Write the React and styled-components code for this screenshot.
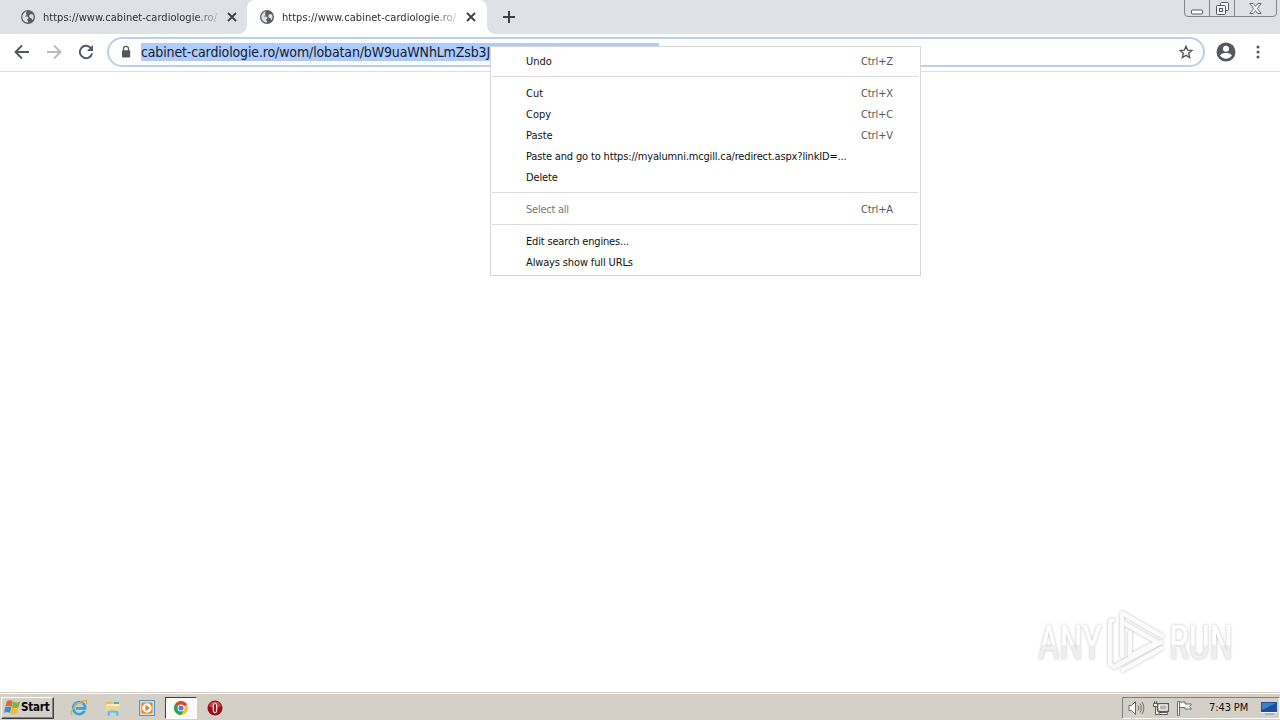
import React from "react";
import styled, { createGlobalStyle, css } from "styled-components";

const GlobalStyle = createGlobalStyle`
  * {
    box-sizing: border-box;
  }
  body {
    margin: 0;
    overflow: hidden;
    background: #fff;
    font-family: "DejaVu Sans Condensed", "DejaVu Sans", Tahoma, sans-serif;
    font-stretch: condensed;
    font-size: 11px;
  }
  svg {
    display: block;
    flex: none;
  }
`;

const Screen = styled.div`
  width: 1280px;
  height: 720px;
  display: flex;
  flex-direction: column;
`;

// ---- tab strip ----
const TabStrip = styled.div`
  height: 34px;
  flex: none;
  display: flex;
  background: #dee1e6;
`;

const Tab = styled.div`
  position: relative;
  width: 240px;
  height: 34px;
  display: flex;
  align-items: center;
  padding: 0 9px 0 12px;
  margin-left: ${(p) => (p.$active ? "-1px" : "8px")};
  border-radius: 8px 8px 0 0;
  background: ${(p) => (p.$active ? "#fff" : "transparent")};

  ${(p) =>
    p.$active &&
    css`
      &::before,
      &::after {
        content: "";
        position: absolute;
        bottom: 0;
        width: 8px;
        height: 8px;
      }
      &::before {
        left: -8px;
        background: radial-gradient(circle at 0 0, transparent 7.5px, #fff 8px);
      }
      &::after {
        right: -8px;
        background: radial-gradient(circle at 100% 0, transparent 7.5px, #fff 8px);
      }
    `}
`;

const TabTitle = styled.div`
  width: 177px;
  margin: 0 7px 0 7px;
  padding-top: 1px;
  white-space: nowrap;
  line-height: 16px;
  letter-spacing: 0.03px;
  color: #2c2f33;
  mask-image: linear-gradient(to right, #000 152px, transparent 180px);
`;

const NewTab = styled.div`
  width: 28px;
  margin-left: 8px;
  display: flex;
  align-items: center;
  justify-content: center;
`;

const WindowButtons = styled.div`
  margin: -1px 3px 0 auto;
  height: 18px;
  display: flex;
  border: 1px solid #83868c;
  border-radius: 0 0 4px 4px;
`;

const WindowButton = styled.div`
  width: ${(p) => p.$width}px;
  display: flex;
  align-items: center;
  justify-content: center;
  & + & {
    border-left: 1px solid #83868c;
  }
`;

// ---- toolbar ----
const Toolbar = styled.div`
  height: 38px;
  flex: none;
  display: flex;
  align-items: center;
  padding: 0 14px 1px;
  border-bottom: 1px solid #dcdee1;
  background: #fff;
`;

const NavButtons = styled.div`
  display: flex;
  gap: 16px;
`;

const Omnibox = styled.div`
  width: 1098px;
  height: 30px;
  margin: 0 11px 0 13px;
  display: flex;
  align-items: center;
  padding: 0 9px;
  border: 2px solid #bdd0ea;
  border-radius: 15px;
`;

const Selection = styled.div`
  width: 518px;
  height: 18px;
  margin: 0 auto 0 7px;
  overflow: hidden;
  white-space: nowrap;
  line-height: 18px;
  font-size: 14px;
  letter-spacing: -0.14px;
  color: #101c33;
  background: #aecbfa;
`;

const Profile = styled.div`
  margin-right: 14px;
`;

// ---- context menu ----
const Menu = styled.div`
  position: absolute;
  left: 490px;
  top: 46px;
  width: 431px;
  height: 230px;
  padding: 4px 1px;
  border: 1px solid #d5d7da;
  background: #fff;
`;

const MenuItem = styled.div`
  height: 21px;
  display: flex;
  align-items: center;
  justify-content: space-between;
  padding: 0 26px 0 34px;
  white-space: nowrap;
  letter-spacing: ${(p) => p.$spacing || "-0.02px"};
  color: ${(p) => (p.$disabled ? "#77797c" : "#111")};
`;

const Shortcut = styled.span`
  letter-spacing: -0.12px;
  color: #55585c;
`;

const Divider = styled.div`
  height: 1px;
  margin: 4px 1px 6px 0;
  background: #dadce0;
`;

const Page = styled.main`
  flex: 1;
  display: flex;
  align-items: flex-end;
  justify-content: flex-end;
  padding: 0 40px 14px 0;
`;

// ---- taskbar ----
const Taskbar = styled.div`
  height: 28px;
  flex: none;
  display: flex;
  align-items: center;
  padding: 2px 0 0 1px;
  border-top: 1px solid #d4d0c8;
  box-shadow: inset 0 1px #fff;
  background: #d4d0c8;
`;

const StartButton = styled.div`
  width: 53px;
  height: 22px;
  display: flex;
  align-items: center;
  padding: 0 0 1px 2px;
  border: 1px solid;
  border-color: #fff #404040 #404040 #fff;
  box-shadow: inset -1px -1px #808080;
  font-size: 11.5px;
  font-weight: bold;
  letter-spacing: -0.2px;
  color: #000;
`;

const QuickLaunch = styled.div`
  display: flex;
  align-items: center;
  margin-left: 8px;
`;

const LaunchItem = styled.div`
  width: ${(p) => (p.$pressed ? 32 : 34)}px;
  height: 22px;
  margin-right: ${(p) => (p.$pressed ? 1 : 0)}px;
  margin-left: ${(p) => (p.$pressed ? 1 : 0)}px;
  display: flex;
  align-items: center;
  justify-content: center;
  ${(p) =>
    p.$pressed &&
    css`
      border: 1px solid;
      border-color: #404040 #fff #fff #404040;
      background: #fcfbfa;
    `}
`;

const Tray = styled.div`
  width: 158px;
  height: 22px;
  margin-left: auto;
  display: flex;
  align-items: center;
  padding-left: 5px;
  border: 1px solid;
  border-color: #808080 #fff #fff #808080;
`;

const TrayIcons = styled.div`
  display: flex;
  gap: 8px;
`;

const Clock = styled.div`
  width: 40px;
  margin: 0 12px 0 15px;
  padding-bottom: 1px;
  white-space: nowrap;
  letter-spacing: -0.1px;
  color: #111;
`;

function Globe() {
  return (
    <svg width="16" height="16" viewBox="0 0 16 16">
      <circle cx="8" cy="8" r="7" fill="#5a5e63" />
      <path
        d="M8.400 2.300c-.3 1-1.500.8-1.600 1.700-.1.800.6 1.200 0 1.900-.5.600-1.400.2-1.700 1 1.300.3 2.700.1 3.200 1.300.4 1-.5 1.300-1.300 1.600-.6.300-.3 1.400.3 2.300l-.5 1.200A5.700 5.700 0 0 1 2.300 7.800 5.700 5.700 0 0 1 8.400 2.300z"
        fill="#dee1e6"
        transform="rotate(-12 8 8)"
      />
      <path d="M9.500 6.200c.3-1.200 1.500-1.100 3.400-.7.900 1.500.9 3.800-.2 5.400-.9.100-.7-1.600-1.700-1.900-1.400-.4-2-1.500-1.500-2.800z" fill="#dee1e6" />
    </svg>
  );
}

function Close() {
  return (
    <svg width="10" height="10" viewBox="0 0 10 10" stroke="#3c4043" strokeWidth="1.800">
      <path d="M1 1l8 8M9 1l-8 8" />
    </svg>
  );
}

function Arrow({ flip, color }) {
  return (
    <svg width="16" height="16" viewBox="0 0 16 16" fill="none" stroke={color} strokeWidth="1.900">
      <path d={flip ? "M1 8h13M8 1.500l6.500 6.500L8 14.500" : "M15 8H2M8 1.500L1.500 8 8 14.500"} />
    </svg>
  );
}

function Reload() {
  return (
    <svg width="16" height="16" viewBox="0 0 16 16">
      <path d="M13.200 4.500A6.200 6.200 0 1 0 14.100 9.400" fill="none" stroke="#54585d" strokeWidth="2" />
      <path d="M15 1v6H9z" fill="#54585d" />
    </svg>
  );
}

function Lock() {
  return (
    <svg width="16" height="16" viewBox="0 0 16 16">
      <path d="M5.500 7V4.800a2.500 2.500 0 0 1 5 0V7" fill="none" stroke="#54585d" strokeWidth="1.300" />
      <rect x="4" y="6.200" width="8.200" height="7.300" rx="1" fill="#54585d" />
    </svg>
  );
}

function Star() {
  return (
    <svg width="16" height="16" viewBox="0 0 16 16" fill="none" stroke="#54585d" strokeWidth="1.400">
      <path d="M8 2.200l1.650 3.900 4.250.4-3.200 2.800.95 4.200L8 11.300l-3.650 2.200.95-4.200-3.200-2.800 4.250-.4z" />
    </svg>
  );
}

function Avatar() {
  return (
    <svg width="20" height="20" viewBox="0 0 20 20">
      <circle cx="10" cy="10" r="9.500" fill="#54585d" />
      <circle cx="10" cy="6.800" r="3" fill="#fff" />
      <path d="M4 13.500c1-2 4-2.500 6-2.500s5 .5 6 2.500c-1.300 2-3.500 3.200-6 3.200s-4.700-1.200-6-3.200z" fill="#fff" />
    </svg>
  );
}

function WindowsFlag() {
  return (
    <svg width="17" height="17" viewBox="0 0 17 16">
      <path d="M2.800 1.800c2-1.500 4.300-1.500 6-.1L7.500 7.400C5.700 6 3.700 6 1.400 7.200z" fill="#e5652c" />
      <path d="M9.300 2c2 1.400 4.300 1.300 6.900-.2l-1.500 5.800c-2.300 1.300-4.700 1.300-6.700.1z" fill="#79b43c" />
      <path d="M1.200 7.800C3.300 6.500 5.500 6.600 7.300 8l-1.400 5.500C4.200 12.200 2.200 12.200 0 13.400z" fill="#3a8fd0" />
      <path d="M7.800 8.300c2 1.100 4.400 1.100 6.700-.1L13 13.800c-2.200 1.300-4.500 1.300-6.600.1z" fill="#f2b92e" />
    </svg>
  );
}

function InternetExplorer() {
  return (
    <svg width="18" height="18" viewBox="0 0 18 18" fill="none">
      <path d="M14.600 11.800A6 6 0 1 1 15.200 9.400H6" stroke="#35a3dc" strokeWidth="2.600" />
      <path d="M4.400 6.800c1.200-3 5.700-4.100 8.700-1.300" stroke="#8fd4f3" />
      <path d="M2.400 16C-.8 15 2.500 9.200 7 5.600 11.300 2.200 16 .4 16.700 2.200c.3.800 0 1.800-.6 3" stroke="#dcae3c" strokeWidth="1.300" />
    </svg>
  );
}

function Folder() {
  return (
    <svg width="18" height="18" viewBox="0 0 18 18">
      <path d="M2 3l5-1 1 1.500h7V12H2z" fill="#e3c35f" />
      <path d="M10 3h5v3h-5z" fill="#58ad9c" />
      <path d="M2.500 5h13v8h-13z" fill="#faf0b8" />
      <path d="M1.500 7h14.500v6H1.500z" fill="#efd985" />
      <path d="M3.500 16.500V13c0-3.200 11-3.200 11 0v3.500H12v-3H6v3z" fill="#6dbbe2" />
      <path d="M4.500 12c1.500-1.500 7.500-1.500 9 0" fill="none" stroke="#c1e6f6" />
    </svg>
  );
}

function MediaPlayer() {
  return (
    <svg width="18" height="18" viewBox="0 0 18 18">
      <rect x="1.500" y="1.500" width="15" height="15" fill="#c5def0" stroke="#5596c9" />
      <rect x="3.500" y="3.500" width="11" height="11" rx="1" fill="#f18518" />
      <circle cx="9" cy="9" r="4.700" fill="#fff" />
      <path d="M7.500 5.800v6.400L12 9z" fill="#ef7d12" />
    </svg>
  );
}

function Chrome() {
  return (
    <svg width="16" height="16" viewBox="0 0 16 16">
      <circle cx="8" cy="8" r="7" fill="#efc329" />
      <path d="M8 8L1.940 4.500A7 7 0 0 1 14.060 4.500z" fill="#dc4335" />
      <path d="M1.940 4.500A7 7 0 0 0 8 15l3-5-3-2z" fill="#26a35a" />
      <circle cx="8" cy="8" r="3.500" fill="#fff" />
      <circle cx="8" cy="8" r="2.600" fill="#4285e4" />
    </svg>
  );
}

function Opera() {
  return (
    <svg width="16" height="16" viewBox="0 0 16 16">
      <circle cx="8" cy="8" r="7.500" fill="#9c0d15" />
      <path d="M2 6a6.300 6.300 0 0 1 12 0c-2 2-10 2-12 0z" fill="#cf4146" />
      <ellipse cx="8" cy="8" rx="2.400" ry="5.300" fill="#fff" />
      <ellipse cx="8" cy="8" rx="1.200" ry="4.500" fill="#a3121a" />
    </svg>
  );
}

function Speaker() {
  return (
    <svg width="17" height="16" viewBox="0 0 17 16" fill="none" stroke="#6b6b69">
      <path d="M1 5.500h2.500L7.500 1.500v13l-4-4H1z" fill="#fff" />
      <path d="M10 5.500c1 1.500 1 3.500 0 5M12 3.500c1.700 2.500 1.700 6.500 0 9M14 2c2.400 3.500 2.400 8.500 0 12" />
    </svg>
  );
}

function Network() {
  return (
    <svg width="16" height="16" viewBox="0 0 16 16" fill="none" stroke="#5a5a58">
      <rect x="4.500" y="3.500" width="11" height="8" fill="#b5b3af" />
      <path d="M6.500 5h7.500v5H6.500z" stroke="#fff" />
      <path d="M.5 3.500h4v3h-4zM1.500 1v2M3.500 1v2M2.500 7v7.500h3" fill="#fff" />
      <path d="M6 14.500h8.500v-2H6z" fill="#fff" />
    </svg>
  );
}

function Flag() {
  return (
    <svg width="17" height="16" viewBox="0 0 17 16" stroke="#6b6b69">
      <path d="M.5 1.500h2v14h-2z" fill="#fff" />
      <path d="M2.500 2h5.500v2h6.500l-2 2.500 2 2.500H8V7.500H2.500z" fill="#fff" />
    </svg>
  );
}

function Desktop() {
  return (
    <svg width="16" height="16" viewBox="0 0 16 16">
      <path d="M0 2h16v10H0z" fill="#1d4f9e" />
      <path d="M1 3h14L1 10z" fill="#3f80cc" />
      <path d="M0 12h16v1H0z" fill="#eef4fa" />
      <path d="M4 14h9" stroke="#7f96ad" />
    </svg>
  );
}

// Faint white lettering with a soft grey edge
function Watermark() {
  return (
    <svg width="210" height="70" viewBox="0 0 210 70">
      <defs>
        <filter id="edge" x="-10%" y="-20%" width="120%" height="140%">
          <feDropShadow dx="0" dy="0" stdDeviation="1.500" floodColor="#777" floodOpacity="0.500" />
        </filter>
        <linearGradient id="fade" x1="0" y1="0" x2="0" y2="1">
          <stop offset="55%" stopColor="#fff" />
          <stop offset="55%" stopColor="#efefef" />
        </linearGradient>
      </defs>
      <g filter="url(#edge)" fill="url(#fade)" fontFamily="Roboto, sans-serif" fontSize="48">
        <text x="8" y="51" textLength="64" lengthAdjust="spacingAndGlyphs">ANY</text>
        <text x="139" y="51" textLength="64" lengthAdjust="spacingAndGlyphs">RUN</text>
      </g>
      <g filter="url(#edge)" fill="none" stroke="#fbfbfb" strokeWidth="4" strokeLinejoin="round" strokeLinecap="round">
        <path d="M92 48V5l40 23M100 24v24l27-14L92 14M83 12c-2 0-3 1-3 3v41l4 3 47-25M93 62l39-22" />
      </g>
    </svg>
  );
}

const tabs = [
  { title: "https://www.cabinet-cardiologie.ro/" },
  { title: "https://www.cabinet-cardiologie.ro/", active: true },
];

// null draws a divider
const menuItems = [
  { label: "Undo", keys: "Ctrl+Z" },
  null,
  { label: "Cut", keys: "Ctrl+X" },
  { label: "Copy", keys: "Ctrl+C" },
  { label: "Paste", keys: "Ctrl+V" },
  { label: "Paste and go to https://myalumni.mcgill.ca/redirect.aspx?linkID=...", spacing: "-0.16px" },
  { label: "Delete", spacing: "-0.16px" },
  null,
  { label: "Select all", keys: "Ctrl+A", disabled: true, spacing: "-0.25px" },
  null,
  { label: "Edit search engines...", spacing: "-0.17px" },
  { label: "Always show full URLs", spacing: "-0.14px" },
];

function ContextMenu() {
  return (
    <Menu>
      {menuItems.map((item, i) =>
        item ? (
          <MenuItem key={i} $disabled={item.disabled} $spacing={item.spacing}>
            {item.label}
            {item.keys && <Shortcut>{item.keys}</Shortcut>}
          </MenuItem>
        ) : (
          <Divider key={i} />
        )
      )}
    </Menu>
  );
}

export default function App() {
  return (
    <Screen>
      <GlobalStyle />
      <TabStrip>
        {tabs.map((tab, i) => (
          <Tab key={i} $active={tab.active}>
            <Globe />
            <TabTitle>{tab.title}</TabTitle>
            <Close />
          </Tab>
        ))}
        <NewTab>
          <svg width="12" height="12" viewBox="0 0 12 12" stroke="#3c4043" strokeWidth="2">
            <path d="M6 0v12M0 6h12" />
          </svg>
        </NewTab>
        <WindowButtons>
          <WindowButton $width={24}>
            <svg width="12" height="13" viewBox="0 0 12 13">
              <rect x=".5" y="8" width="11" height="4" rx="1" fill="#fff" stroke="#55585e" />
            </svg>
          </WindowButton>
          <WindowButton $width={25}>
            <svg width="13" height="13" viewBox="0 0 13 13" fill="#f4f5f7" stroke="#55585e">
              <rect x="4.500" y=".5" width="8" height="8" rx="1" />
              <rect x=".5" y="3.500" width="9" height="9" rx="1" />
              <rect x="3.500" y="6.500" width="3" height="3" />
            </svg>
          </WindowButton>
          <WindowButton $width={42}>
            <svg width="13" height="11" viewBox="0 0 13 11" fill="#fff" stroke="#55585e" strokeWidth=".9">
              <path d="M.8.500h3.400l2.300 2.800L8.800.5h3.400L8.300 5.500l3.900 5H8.800L6.500 7.700l-2.300 2.800H.8l3.900-5z" />
            </svg>
          </WindowButton>
        </WindowButtons>
      </TabStrip>

      <Toolbar>
        <NavButtons>
          <Arrow color="#54585d" />
          <Arrow flip color="#b9bbbe" />
          <Reload />
        </NavButtons>
        <Omnibox>
          <Lock />
          <Selection>cabinet-cardiologie.ro/wom/lobatan/bW9uaWNhLmZsb3JlYQ</Selection>
          <Star />
        </Omnibox>
        <Profile>
          <Avatar />
        </Profile>
        <svg width="16" height="16" viewBox="0 0 16 16" fill="#54585d">
          <circle cx="8" cy="3" r="1.500" />
          <circle cx="8" cy="8" r="1.500" />
          <circle cx="8" cy="13" r="1.500" />
        </svg>
      </Toolbar>

      <Page>
        <Watermark />
      </Page>

      <Taskbar>
        <StartButton>
          <WindowsFlag />
          Start
        </StartButton>
        <QuickLaunch>
          <LaunchItem><InternetExplorer /></LaunchItem>
          <LaunchItem><Folder /></LaunchItem>
          <LaunchItem><MediaPlayer /></LaunchItem>
          <LaunchItem $pressed><Chrome /></LaunchItem>
          <LaunchItem><Opera /></LaunchItem>
        </QuickLaunch>
        <Tray>
          <TrayIcons>
            <Speaker />
            <Network />
            <Flag />
          </TrayIcons>
          <Clock>7:43 PM</Clock>
          <Desktop />
        </Tray>
      </Taskbar>

      <ContextMenu />
    </Screen>
  );
}
